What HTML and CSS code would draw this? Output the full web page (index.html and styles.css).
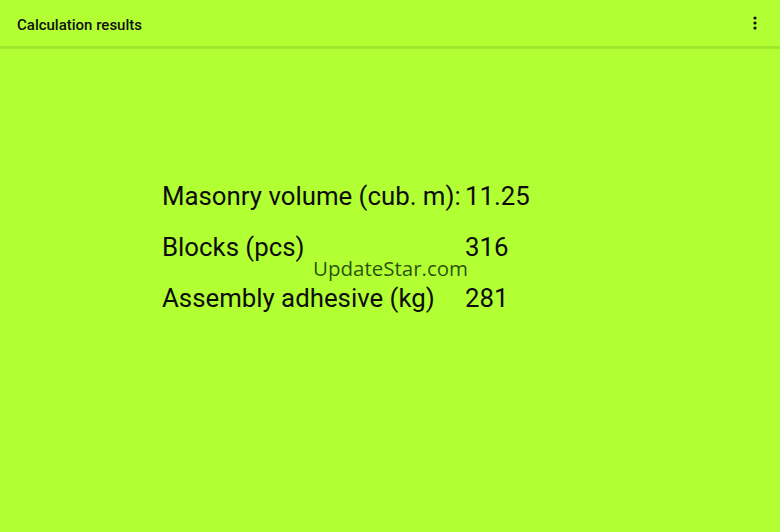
FILE: index.html
```html
<!DOCTYPE html>
<html>
<head>
<meta charset="utf-8">
<link rel="stylesheet" href="styles.css">
</head>
<body>
<header class="appbar">
  <span class="title">Calculation results</span>
  <svg class="menu" width="4" height="14" viewBox="0 0 4 14"><circle cx="2" cy="2" r="1.6" fill="#111"/><circle cx="2" cy="7" r="1.6" fill="#111"/><circle cx="2" cy="12" r="1.6" fill="#111"/></svg>
</header>
<main class="content">
  <div class="results">
    <div class="label">Masonry volume (cub. m):</div><div class="value">11.25</div>
    <div class="label">Blocks (pcs)</div><div class="value">316</div>
    <div class="label">Assembly adhesive (kg)</div><div class="value">281</div>
    <div class="watermark">UpdateStar.com</div>
  </div>
</main>
</body>
</html>
```
FILE: styles.css
```css
html, body {
  margin: 0;
  padding: 0;
  width: 780px;
  height: 532px;
  overflow: hidden;
  background: #b2ff33;
  font-family: Roboto, "Noto Sans", sans-serif;
  color: #111;
}
.appbar {
  height: 48px;
  display: flex;
  align-items: center;
  justify-content: space-between;
  padding: 0 23px 0 17px;
  box-sizing: border-box;
  border-bottom: 2px solid #a0e62c;
  box-shadow: 0 1px 1px rgba(80,120,0,0.15);
}
.title {
  font-size: 15px;
  font-weight: 500;
  margin-top: 3px;
}
.menu {
  display: block;
  margin-top: -1px;
}
.content {
  padding: 122px 0 0 162px;
}
.results {
  position: relative;
  display: grid;
  grid-template-columns: 303px auto;
  grid-auto-rows: 51px;
  align-items: center;
  font-size: 25.8px;
  color: #0d0d0d;
}
.watermark {
  position: absolute;
  left: 151px;
  top: 84px;
  font-family: "Open Sans", sans-serif;
  font-size: 20.5px;
  color: rgba(15, 50, 5, 0.85);
}
```
